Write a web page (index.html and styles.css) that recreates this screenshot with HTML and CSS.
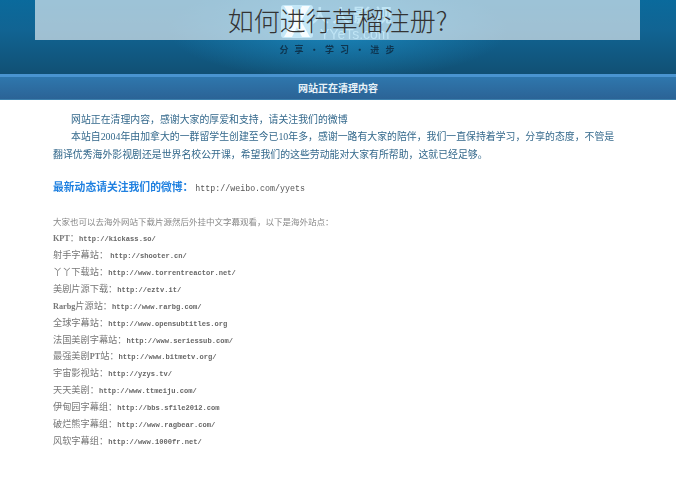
FILE: index.html
```html
<!DOCTYPE html>
<html lang="zh-CN">
<head>
    <meta charset="UTF-8">
    <meta name="viewport" content="width=device-width, initial-scale=1.0">
    <title>如何进行草榴注册?</title>
    <link rel="stylesheet" href="styles.css">
</head>
<body>
    <div class="header">
        <div class="logo">
            <svg class="logo-mark" width="32" height="33" viewBox="0 0 32 33">
                <rect x="0" y="0" width="32" height="33" rx="3" fill="#6cc4ec"></rect>
                <path d="M3 1 L11 1 L16 11 L21 1 L29 1 L20 16 L29 32 L21 32 L16 22 L11 32 L3 32 L12 16 Z" fill="#eaf7fd"></path>
            </svg>
            <div class="logo-words">
                <span class="logo-cn">人人影视</span>
                <span class="logo-en">YYeTs.com</span>
            </div>
        </div>
        <div class="tagline">分 享 · 学 习 · 进 步</div>
        <div class="title-overlay">如何进行草榴注册?</div>
    </div>

    <div class="bar">网站正在清理内容</div>

    <div class="content">
        <div class="notice">
            <p class="indent">网站正在清理内容，感谢大家的厚爱和支持，请关注我们的微博</p>
            <p class="indent">本站自<span class="num">2004</span>年由加拿大的一群留学生创建至今已<span class="num">10</span>年多，感谢一路有大家的陪伴，我们一直保持着学习，分享的态度，不管是</p>
            <p>翻译优秀海外影视剧还是世界名校公开课，希望我们的这些劳动能对大家有所帮助，这就已经足够。</p>
        </div>

        <div class="weibo">
            <strong>最新动态请关注我们的微博：</strong>
            <span>http://weibo.com/yyets</span>
        </div>

        <p class="intro">大家也可以去海外网站下载片源然后外挂中文字幕观看，以下是海外站点：</p>
        <ul class="sites">
            <li><b>KPT</b>：<span>http://kickass.so/</span></li>
            <li>射手字幕站： <span>http://shooter.cn/</span></li>
            <li>丫丫下载站：<span>http://www.torrentreactor.net/</span></li>
            <li>美剧片源下载：<span>http://eztv.it/</span></li>
            <li><b>Rarbg</b>片源站：<span>http://www.rarbg.com/</span></li>
            <li>全球字幕站：<span>http://www.opensubtitles.org</span></li>
            <li>法国美剧字幕站：<span>http://www.seriessub.com/</span></li>
            <li>最强美剧<b>PT</b>站：<span>http://www.bitmetv.org/</span></li>
            <li>宇宙影视站：<span>http://yzys.tv/</span></li>
            <li>天天美剧：<span>http://www.ttmeiju.com/</span></li>
            <li>伊甸园字幕组：<span>http://bbs.sfile2012.com</span></li>
            <li>破烂熊字幕组：<span>http://www.ragbear.com/</span></li>
            <li>风软字幕组：<span>http://www.1000fr.net/</span></li>
        </ul>
    </div>
</body>
</html>
```

FILE: styles.css
```css
body {
    margin: 0;
    background: #fff;
    font-family: "Noto Sans CJK SC", sans-serif;
}
p {
    margin: 0;
}
.header {
    position: relative;
    height: 74px;
    box-sizing: border-box;
    padding-top: 5px;
    background:
        radial-gradient(ellipse 170px 50px at 338px 30px, rgba(28,140,195,0.8), rgba(28,140,195,0)),
        linear-gradient(#0a6a9c, #116493 40%, #115074);
    overflow: hidden;
}
.logo {
    display: flex;
    justify-content: center;
    height: 33px;
    filter: blur(0.6px);
}
.logo-mark {
    flex: none;
}
.logo-words {
    display: flex;
    flex-direction: column;
    width: 84px;
    margin-left: -2px;
    color: #62bde6;
    line-height: 1;
    white-space: nowrap;
}
.logo-cn {
    font-size: 18px;
    font-weight: 700;
    letter-spacing: 3px;
}
.logo-en {
    margin: 4px 0 0 9px;
    font-family: "Liberation Sans", sans-serif;
    font-size: 14px;
}
.tagline {
    margin-top: 5px;
    text-align: center;
    font-size: 9px;
    font-weight: 700;
    line-height: 13px;
    letter-spacing: 2.05px;
    color: #0e3550;
    filter: blur(0.7px);
}
.title-overlay {
    position: absolute;
    left: 35px;
    top: 0;
    width: 605px;
    height: 40px;
    background: rgba(255,255,255,0.6);
    color: #333;
    font-size: 26px;
    font-weight: 300;
    line-height: 40px;
    text-align: center;
}
.bar {
    height: 26px;
    box-sizing: border-box;
    border-top: 3px solid #4a94d0;
    border-bottom: 1px solid #3d80ad;
    background: linear-gradient(#2f77ad, #2b6396);
    color: #e8f2f8;
    font-size: 10px;
    font-weight: 700;
    line-height: 21px;
    text-align: center;
}
.content {
    padding: 11px 0 0 53px;
    filter: blur(0.35px);
}
.notice {
    color: #34698c;
    font-size: 9.88px;
    line-height: 17.4px;
    white-space: nowrap;
}
.num {
    font-family: "Liberation Serif", serif;
}
.indent {
    text-indent: 18px;
}
.weibo {
    display: flex;
    align-items: baseline;
    gap: 2px;
    margin-top: 14px;
    height: 18px;
    line-height: 18px;
    white-space: nowrap;
}
.weibo strong {
    color: #1f80e0;
    font-size: 10.8px;
}
.weibo span {
    color: #555;
    font-family: "Liberation Mono", monospace;
    font-size: 8.3px;
}
.intro {
    margin-top: 18px;
    height: 16px;
    color: #888;
    font-size: 8.5px;
    line-height: 16px;
}
.sites {
    list-style: none;
    margin: 0;
    padding: 0;
    color: #777;
    font-size: 9.2px;
    white-space: nowrap;
}
.sites li {
    height: 16.9px;
    line-height: 16.9px;
}
.sites span {
    color: #666;
    font-family: "Liberation Mono", monospace;
    font-size: 7.1px;
    font-weight: 700;
}
.sites b {
    font-family: "Liberation Serif", serif;
    font-size: 8.2px;
}
```
